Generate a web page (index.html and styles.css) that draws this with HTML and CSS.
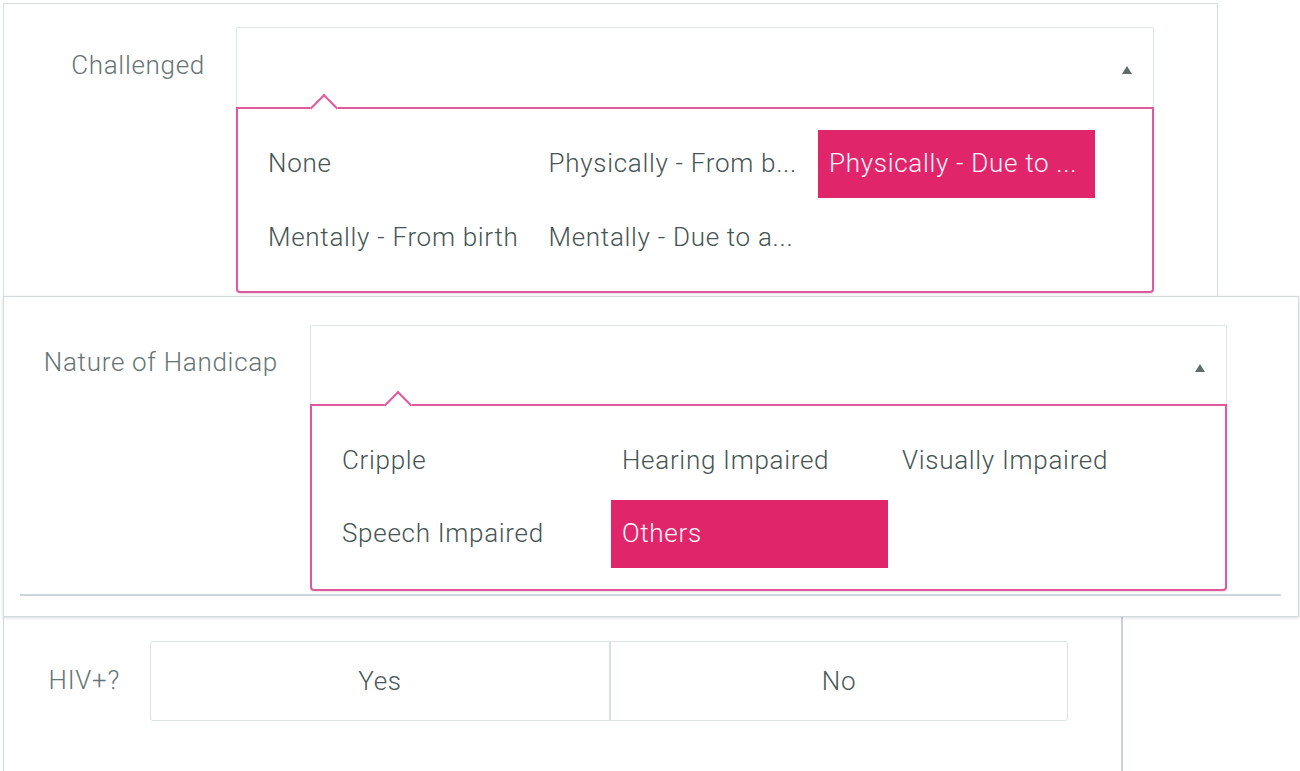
FILE: index.html
```html
<!DOCTYPE html>
<html lang="en">
<head>
<meta charset="utf-8">
<title>Form</title>
<link rel="stylesheet" href="styles.css">
</head>
<body>
<div class="page">
  <section class="panel panel-one">
    <div class="field field-one">
      <div class="label">Challenged</div>
      <div class="select">
        <div class="select-head"><span class="caret"></span></div>
        <div class="menu">
          <div class="option">None</div>
          <div class="option">Physically - From b...</div>
          <div class="option selected">Physically - Due to ...</div>
          <div class="option">Mentally - From birth</div>
          <div class="option">Mentally - Due to a...</div>
        </div>
      </div>
    </div>
  </section>

  <section class="panel panel-two">
    <div class="field field-two">
      <div class="label">Nature of Handicap</div>
      <div class="select">
        <div class="select-head"><span class="caret"></span></div>
        <div class="menu menu-two">
          <div class="option">Cripple</div>
          <div class="option">Hearing Impaired</div>
          <div class="option">Visually Impaired</div>
          <div class="option">Speech Impaired</div>
          <div class="option selected">Others</div>
        </div>
      </div>
    </div>
    <div class="divider"></div>
  </section>

  <section class="panel panel-three">
    <div class="field field-three">
      <div class="label">HIV+?</div>
      <div class="toggle">
        <div class="toggle-btn">Yes</div>
        <div class="toggle-btn">No</div>
      </div>
    </div>
  </section>
</div>
</body>
</html>
```
FILE: styles.css
```css
* {
  box-sizing: border-box;
}

html, body {
  margin: 0;
  padding: 0;
  background: #ffffff;
}

body {
  font-family: Roboto, "Noto Sans", "Liberation Sans", sans-serif;
  font-size: 26px;
  font-weight: 300;
  letter-spacing: 0.7px;
  color: #4c5a5a;
  overflow: hidden;
  height: 771px;
}

.page {
  padding: 3px 0 0 3px;
}

.panel {
  background: #ffffff;
  position: relative;
}

.panel-one {
  width: 1215px;
  border: 1px solid #d6dfdf;
  border-bottom: none;
  padding: 23px 0 3px 0;
}

.panel-two {
  width: 1296px;
  border: 1px solid #d3dcdc;
  padding: 28px 0 20px 0;
  box-shadow: 0 1px 3px rgba(40, 60, 60, 0.18);
  z-index: 2;
}

.panel-three {
  width: 1120px;
  border-left: 1px solid #d3dcdc;
  border-right: 2px solid #c9d3d3;
  padding: 24px 0 0 0;
  height: 160px;
  z-index: 1;
}

.field {
  display: grid;
  align-items: start;
}

.field-one {
  grid-template-columns: 232px 918px;
}

.field-two {
  grid-template-columns: 306px 917px;
}

.field-three {
  grid-template-columns: 146px 918px;
}

.label {
  text-align: right;
  color: #667474;
  height: 80px;
  line-height: 76px;
  padding-right: 31px;
  white-space: nowrap;
}

.field-two .label {
  padding-right: 32px;
  line-height: 74px;
}

.field-three .label {
  padding-right: 30px;
  line-height: 78px;
}

.select {
  position: relative;
}

.select-head {
  height: 80px;
  border: 1px solid #dde5e5;
  border-bottom: none;
  border-radius: 2px 2px 0 0;
  position: relative;
}

.field-two .select-head {
  height: 79px;
}

.caret {
  position: absolute;
  right: 21px;
  top: 38px;
  width: 0;
  height: 0;
  border-left: 5.5px solid transparent;
  border-right: 5.5px solid transparent;
  border-bottom: 8px solid #5e6c6c;
}

.menu {
  position: relative;
  border: 2px solid #e2589c;
  border-radius: 0 0 4px 4px;
  padding: 21px 19px 19px 19px;
  display: grid;
  grid-template-columns: repeat(3, 277px);
  grid-auto-rows: 68px;
  column-gap: 3.5px;
  row-gap: 6px;
  background: #ffffff;
  box-shadow: 0 1px 2px rgba(40, 60, 60, 0.15);
}

.menu::before {
  content: "";
  position: absolute;
  top: -11px;
  left: 76px;
  width: 18px;
  height: 18px;
  background: #ffffff;
  border-top: 2px solid #e2589c;
  border-left: 2px solid #e2589c;
  transform: rotate(45deg);
}

.menu-two {
  column-gap: 3px;
  row-gap: 5px;
  padding-bottom: 21px;
}

.option {
  display: flex;
  align-items: center;
  padding: 0 11px 2px 11px;
  white-space: nowrap;
  overflow: hidden;
  color: #465454;
}

.option.selected {
  background: #e1256b;
  color: #fff5fa;
}

.divider {
  margin: 3px 17px 0 16px;
  height: 2px;
  background: #cad6d7;
}

.toggle {
  display: grid;
  grid-template-columns: 458px 1fr;
  height: 80px;
  border: 1px solid #dbe3e3;
  border-radius: 3px;
}

.toggle-btn {
  display: flex;
  align-items: center;
  justify-content: center;
  color: #4a5858;
}

.toggle-btn + .toggle-btn {
  border-left: 2px solid #d8e1e1;
}
```
